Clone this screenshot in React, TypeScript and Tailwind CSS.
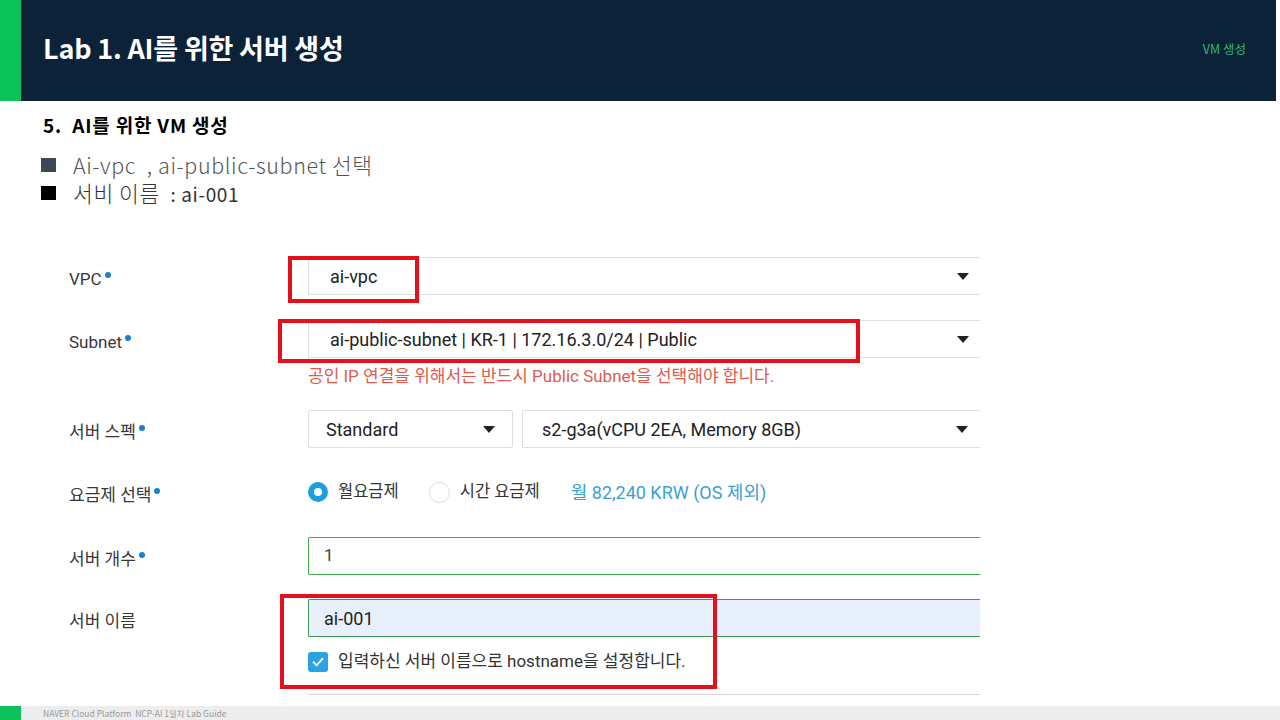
import React from "react";

const formFont = { fontFamily: "Roboto, 'Noto Sans CJK KR', sans-serif" };
const slideFont = { fontFamily: "'Noto Sans CJK KR', 'Noto Sans', sans-serif" };

function Caret() {
  return (
    <svg width="12" height="7" viewBox="0 0 12 7" className="shrink-0">
      <path d="M0 0 H12 L6 7 Z" fill="#222" />
    </svg>
  );
}

function Label({ text, required = true }: { text: string; required?: boolean }) {
  return (
    <div className="w-[239px] shrink-0 flex items-center pt-[7px] text-[17px] text-[#383838]">
      <span>{text}</span>
      {required && <span className="ml-[3px] -mt-[10px] w-[6px] h-[6px] rounded-full bg-[#1a7fd4]" />}
    </div>
  );
}

export default function App() {
  return (
    <div className="relative w-[1280px] h-[720px] bg-white overflow-hidden flex flex-col">
      {/* slide header */}
      <div className="flex h-[101px] shrink-0">
        <div className="w-[21px] bg-[#0cc25a]" />
        <div className="flex-1 bg-[#0b2239] flex items-center justify-between pl-[22px] pr-[30px]">
          <span className="text-white text-[27px] font-bold tracking-[-0.2px] -mt-[5px]" style={slideFont}>
            Lab 1. AI를 위한 서버 생성
          </span>
          <span className="text-[#35b56f] text-[12.5px] -mt-[3px]" style={slideFont}>
            VM 생성
          </span>
        </div>
        <div className="w-[4px] bg-white" />
      </div>

      {/* section heading and notes */}
      <div className="pl-[43px] pt-[11px]" style={slideFont}>
        <div className="text-[19px] font-bold text-black leading-[26px] tracking-[0.8px]">5.&nbsp; AI를 위한 VM 생성</div>
        <div className="mt-[13px] flex items-center h-[28px]">
          <span className="w-[15px] h-[14px] bg-[#3b4858] -ml-[2px]" />
          <span className="ml-[17px] text-[21.5px] font-light text-[#555] tracking-[0.6px]">Ai-vpc&nbsp;&nbsp;, ai-public-subnet 선택</span>
        </div>
        <div className="flex items-center h-[28px]">
          <span className="w-[15px] h-[14px] bg-black -ml-[2px]" />
          <span className="ml-[17px] text-[21.5px] font-light text-[#333] tracking-[0.6px]">서비 이름&nbsp;&nbsp;<span className="text-[19px] font-normal">: ai-001</span></span>
        </div>
      </div>

      {/* instance form */}
      <div className="pl-[69px] mt-[50px]" style={formFont}>
        {/* VPC */}
        <div className="flex items-center h-[38px]">
          <Label text="VPC" />
          <div className="w-[672px] h-full border-y border-l border-[#dedede] flex items-center justify-between pl-[21px] pr-[11px]">
            <span className="text-[18px] text-[#222]">ai-vpc</span>
            <Caret />
          </div>
        </div>

        {/* Subnet */}
        <div className="flex items-center h-[38px] mt-[25px]">
          <Label text="Subnet" />
          <div className="w-[672px] h-full border-y border-l border-[#dedede] flex items-center justify-between pl-[21px] pr-[11px]">
            <span className="text-[18px] text-[#222]">ai-public-subnet | KR-1 | 172.16.3.0/24 | Public</span>
            <Caret />
          </div>
        </div>
        <div className="ml-[239px] mt-[9px] h-[20px] flex items-center text-[17px] text-[#e05a4e]">
          공인 IP 연결을 위해서는 반드시 Public Subnet을 선택해야 합니다.
        </div>

        {/* server spec */}
        <div className="flex items-center h-[38px] mt-[23px]">
          <Label text="서버 스펙" />
          <div className="flex gap-[9px] h-full">
            <div className="w-[205px] h-full border border-[#dedede] rounded-[2px] flex items-center justify-between pl-[17px] pr-[17px]">
              <span className="text-[18px] text-[#222]">Standard</span>
              <Caret />
            </div>
            <div className="w-[458px] h-full border-y border-l border-[#dedede] rounded-l-[2px] flex items-center justify-between pl-[19px] pr-[12px]">
              <span className="text-[18px] text-[#222]">s2-g3a(vCPU 2EA, Memory 8GB)</span>
              <Caret />
            </div>
          </div>
        </div>

        {/* billing */}
        <div className="flex items-center h-[24px] mt-[32px]">
          <Label text="요금제 선택" />
          <div className="flex items-center text-[16.5px] text-[#333]">
            <span className="w-[20px] h-[20px] rounded-full bg-[#1d9fdc] flex items-center justify-center">
              <span className="w-[8px] h-[8px] rounded-full bg-white" />
            </span>
            <span className="ml-[10px]">월요금제</span>
            <span className="ml-[30px] w-[21px] h-[21px] rounded-full border border-[#dcdcdc]" />
            <span className="ml-[10px]">시간 요금제</span>
            <span className="ml-[31px] text-[18px] text-[#3a9fd6]">월 82,240 KRW (OS 제외)</span>
          </div>
        </div>

        {/* count */}
        <div className="flex items-center h-[38px] mt-[33px]">
          <Label text="서버 개수" />
          <div className="w-[672px] h-full border-y border-l border-[#3faa4f] rounded-l-[2px] flex items-center pl-[15px]">
            <span className="text-[17px] text-[#444]">1</span>
          </div>
        </div>

        {/* name */}
        <div className="flex items-center h-[38px] mt-[24px]">
          <Label text="서버 이름" required={false} />
          <div className="w-[672px] h-full border-y border-l border-[#3d9a55] bg-[#e8f0fd] rounded-l-[2px] flex items-center pl-[15px]">
            <span className="text-[18px] text-[#222]">ai-001</span>
          </div>
        </div>
        <div className="ml-[239px] mt-[14px] h-[21px] flex items-center">
          <span className="w-[20px] h-[20px] rounded-[3px] bg-[#2aa3e3] flex items-center justify-center">
            <svg width="14" height="14" viewBox="0 0 14 14">
              <path d="M2.5 7.2 L5.6 10.3 L11.6 3.6" fill="none" stroke="#fff" strokeWidth="1.8" strokeLinecap="round" strokeLinejoin="round" />
            </svg>
          </span>
          <span className="ml-[10px] text-[17px] text-[#333]">입력하신 서버 이름으로 hostname을 설정합니다.</span>
        </div>
        <div className="ml-[239px] mt-[22px] w-[672px] border-t border-[#d6d6d6]" />
      </div>

      {/* slide footer */}
      <div className="mt-auto flex h-[14px]">
        <div className="w-[21px] bg-[#0cc25a]" />
        <div className="flex-1 bg-[#ededed] flex items-center pl-[22px]">
          <span className="text-[8.5px] text-[#9a9a9a]" style={slideFont}>
            NAVER Cloud Platform&nbsp; NCP-AI 1일차 Lab Guide
          </span>
        </div>
      </div>

      {/* red highlight boxes */}
      <div className="absolute left-[288px] top-[256px] w-[131px] h-[47px] border-[4px] border-[#e5101b]" />
      <div className="absolute left-[278px] top-[319px] w-[582px] h-[44px] border-[4px] border-[#e5101b]" />
      <div className="absolute left-[280px] top-[594px] w-[437px] h-[95px] border-[4px] border-[#e5101b]" />
    </div>
  );
}
